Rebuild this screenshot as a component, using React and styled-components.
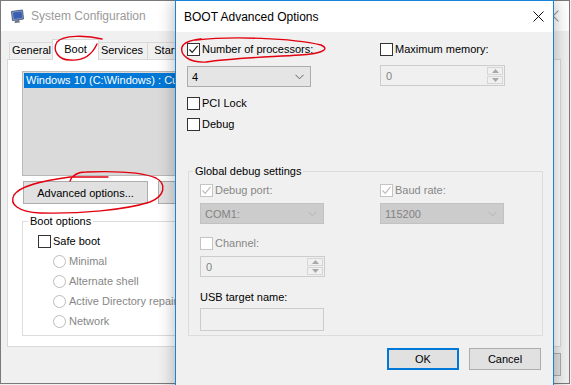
import styled, { createGlobalStyle } from "styled-components";

const GlobalStyle = createGlobalStyle`
  html, body { margin: 0; padding: 0; background: #fff; }
  body {
    font-family: "Liberation Sans", Arial, sans-serif;
    font-size: 11px;
    color: #000;
  }
  * { box-sizing: border-box; }
  fieldset { margin: 0; min-width: 0; }
`;

// desktop canvas, windows are placed on it
const Desktop = styled.div`
  position: relative;
  width: 571px;
  height: 385px;
  overflow: hidden;
  background: #f0f0f0;
`;

const Window = styled.div`
  position: absolute;
  z-index: ${p => p.$z};
  left: ${p => p.$x}px;
  top: ${p => p.$y}px;
  width: ${p => p.$w}px;
  height: ${p => p.$h}px;
  display: flex;
  flex-direction: column;
  background: #f0f0f0;
  border: 1px solid ${p => (p.$active ? "#1883d7" : "#7a7a7a")};
  box-shadow: ${p => (p.$active ? "0 0 16px rgba(0, 0, 0, 0.3)" : "none")};
`;

const TitleBar = styled.div`
  flex: none;
  display: flex;
  align-items: center;
  height: ${p => p.$h}px;
  padding-left: ${p => p.$pad}px;
  gap: 6px;
  background: #fff;
  font-size: 12px;
  color: ${p => (p.$active ? "#000" : "#9a9a9a")};
`;

const TitleText = styled.span`
  flex: 1;
  white-space: nowrap;
`;

const CloseBtn = styled.span`
  width: ${p => p.$w}px;
  height: 100%;
  display: flex;
  align-items: center;
  justify-content: center;
  flex: none;
`;

/* ---------- background window ---------- */

const BackBody = styled.div`
  flex: 1;
  display: flex;
  flex-direction: column;
  padding: 8px 8px 0 6px;
`;

const TabStrip = styled.div`
  display: flex;
  align-items: flex-end;
  height: 21px;
  padding-left: 3px;
  margin-bottom: -1px;
  position: relative;
  z-index: 1;
`;

const Tab = styled.div`
  display: flex;
  align-items: center;
  justify-content: center;
  width: ${p => p.$w}px;
  height: ${p => (p.$active ? 21 : 18)}px;
  padding-bottom: 2px;
  margin: 0 ${p => (p.$active ? -2 : 0)}px 0 ${p => (p.$active ? -2 : -1)}px;
  border: 1px solid #d9d9d9;
  border-bottom: ${p => (p.$active ? "none" : "1px solid #d9d9d9")};
  background: ${p => (p.$active ? "#fff" : "#f0f0f0")};
  position: relative;
  z-index: ${p => (p.$active ? 2 : 0)};
  white-space: nowrap;
`;

const TabPanel = styled.div`
  height: 288px;
  background: #fff;
  border: 1px solid #d9d9d9;
  padding: 11px 14px 0;
  display: flex;
  flex-direction: column;
`;

const ListBox = styled.div`
  height: 105px;
  border: 1px solid #b9b9b9;
  background: #dadada;
  padding: 1px;
`;

const ListItem = styled.div`
  height: 15px;
  line-height: 15px;
  padding-left: 2px;
  background: ${p => (p.$selected ? "#0078d7" : "transparent")};
  color: ${p => (p.$selected ? "#fff" : "#000")};
  white-space: nowrap;
`;

const ButtonRow = styled.div`
  display: flex;
  gap: 10px;
  justify-content: ${p => (p.$end ? "flex-end" : "flex-start")};
  margin-top: ${p => p.$mt || 0}px;
  padding-right: ${p => p.$pr || 0}px;
  padding-left: ${p => p.$pl || 0}px;
`;

const Button = styled.button`
  width: ${p => p.$w}px;
  height: ${p => p.$h || 23}px;
  flex: none;
  font: inherit;
  color: #000;
  background: #e1e1e1;
  border: ${p => (p.$default ? "2px solid #0078d7" : "1px solid #adadad")};
  padding: 0;
`;

const GroupBox = styled.fieldset`
  border: 1px solid #dcdcdc;
  padding: ${p => p.$pad};
  margin: ${p => p.$m};
  height: ${p => p.$h}px;
`;

const Legend = styled.legend`
  padding: 0 2px;
  margin-left: ${p => p.$ml}px;
  line-height: 14px;
`;

const OptionList = styled.div`
  display: flex;
  flex-direction: column;
`;

const OptionRow = styled.div`
  display: flex;
  align-items: center;
  height: 20px;
  padding-left: ${p => p.$indent || 0}px;
`;

const RadioCircle = styled.span`
  width: 13px;
  height: 13px;
  border-radius: 50%;
  border: 1px solid #bcbcbc;
  background: #fff;
  flex: none;
`;

const Label = styled.span`
  color: ${p => (p.$disabled ? "#878787" : "#000")};
  white-space: nowrap;
  line-height: 13px;
  margin-left: ${p => p.$ml || 0}px;
`;

const CheckRow = styled.div`
  display: flex;
  align-items: center;
  gap: 2px;
  height: 13px;
  margin-top: ${p => p.$mt || 0}px;
`;

const CheckBox = styled.span`
  width: 13px;
  height: 13px;
  flex: none;
  border: 1px solid ${p => (p.$disabled ? "#c4c4c4" : "#333")};
  background: #fff;
  display: flex;
  align-items: center;
  justify-content: center;
`;

function Check({ label, checked, disabled, mt }) {
  return (
    <CheckRow $mt={mt}>
      <CheckBox $disabled={disabled}>
        {checked && (
          <svg width="11" height="11" viewBox="0 0 11 11">
            <path
              d="M1.5 5.5 L4.2 8.3 L9.6 1.8"
              fill="none"
              stroke={disabled ? "#bcbcbc" : "#222"}
              strokeWidth="1.2"
            />
          </svg>
        )}
      </CheckBox>
      <Label $disabled={disabled}>{label}</Label>
    </CheckRow>
  );
}

function Radio({ label }) {
  return (
    <OptionRow $indent={15}>
      <RadioCircle />
      <Label $disabled $ml={3}>
        {label}
      </Label>
    </OptionRow>
  );
}

/* ---------- dialog ---------- */

const DialogBody = styled.div`
  flex: 1;
  display: flex;
  flex-direction: column;
  padding: 11px 10px 0 11px;
`;

const Columns = styled.div`
  display: grid;
  grid-template-columns: ${p => p.$first}px 1fr;
`;

const Field = styled.div`
  display: flex;
  flex-direction: column;
  gap: ${p => p.$gap}px;
  margin-top: ${p => p.$mt || 0}px;
`;

const Combo = styled.div`
  width: 124px;
  height: 21px;
  display: flex;
  align-items: center;
  justify-content: space-between;
  padding: 0 6px 0 4px;
  border: 1px solid ${p => (p.$disabled ? "#c2c2c2" : "#acacac")};
  background: ${p => (p.$disabled ? "#cccccc" : "#e5e5e5")};
  color: ${p => (p.$disabled ? "#838383" : "#000")};
`;

function Select({ value, disabled }) {
  return (
    <Combo $disabled={disabled}>
      <span>{value}</span>
      <svg width="9" height="6" viewBox="0 0 9 6">
        <path d="M0.5 0.8 L4.5 4.8 L8.5 0.8" fill="none" stroke={disabled ? "#b4b4b4" : "#606060"} strokeWidth="1" />
      </svg>
    </Combo>
  );
}

const SpinBox = styled.div`
  width: 125px;
  height: 21px;
  display: flex;
  align-items: center;
  border: 1px solid #cccccc;
  background: #f0f0f0;
  color: #838383;
  padding: 1px 1px 1px 5px;
`;

const SpinValue = styled.span`
  flex: 1;
`;

const SpinButtons = styled.div`
  width: 16px;
  height: 100%;
  display: flex;
  flex-direction: column;
  gap: 1px;
`;

const SpinPart = styled.div`
  flex: 1;
  border: 1px solid #d6d6d6;
  background: #f0f0f0;
  display: flex;
  align-items: center;
  justify-content: center;
`;

function Spin({ value }) {
  return (
    <SpinBox>
      <SpinValue>{value}</SpinValue>
      <SpinButtons>
        <SpinPart>
          <svg width="7" height="4" viewBox="0 0 7 4">
            <path d="M0 4 L3.5 0 L7 4 Z" fill="#a8a8a8" />
          </svg>
        </SpinPart>
        <SpinPart>
          <svg width="7" height="4" viewBox="0 0 7 4">
            <path d="M0 0 L3.5 4 L7 0 Z" fill="#a8a8a8" />
          </svg>
        </SpinPart>
      </SpinButtons>
    </SpinBox>
  );
}

const TextBox = styled.div`
  width: 124px;
  height: 23px;
  border: 1px solid #cccccc;
  background: #f0f0f0;
`;

const Caption = styled.div`
  line-height: 13px;
  margin-top: ${p => p.$mt}px;
  margin-bottom: ${p => p.$mb}px;
`;

/* ---------- drawings ---------- */

const AppIcon = () => (
  <svg width="15" height="15" viewBox="0 0 15 15">
    <path d="M1.5 2.5 L12.5 1 L13.5 10 L2.5 11.5 Z" fill="#8aa0c8" stroke="#4f5f80" strokeWidth="1" />
    <path d="M3 3.6 L11.6 2.5 L12.3 9 L3.7 10.1 Z" fill="#3a5fb0" />
    <path d="M5 11.3 L9 10.8 L10 13.5 L4.5 14 Z" fill="#6f7a8c" />
  </svg>
);

const CloseIcon = ({ color, size }) => (
  <svg width={size} height={size} viewBox="0 0 11 11">
    <path d="M0.5 0.5 L10.5 10.5 M10.5 0.5 L0.5 10.5" stroke={color} strokeWidth="1" />
  </svg>
);

const Annotations = styled.svg`
  position: absolute;
  left: 0;
  top: 0;
  z-index: 10;
  pointer-events: none;
`;

const marks = [
  "M102 39 C86 35, 63 35, 57 42 C52 50, 58 60, 70 60 C83 61, 92 55, 97 44",
  "M70 181 C72 176, 77 172, 86 172 C112 171, 142 172, 156 178 C167 184, 165 196, 150 202 C125 210, 80 214, 40 213 C18 212, 9 204, 14 195 C20 186, 40 181, 70 177 L108 177",
  "M196 40 C232 36, 292 38, 321 45 C332 50, 318 54, 300 55 C270 57, 232 58, 206 62 C189 63, 180 55, 182 47 C184 42, 191 40, 201 39"
];

const tabs = [
  { label: "General", w: 45 },
  { label: "Boot", w: 47 },
  { label: "Services", w: 52 },
  { label: "Startup", w: 50 },
  { label: "Tools", w: 40 }
];
const radios = ["Minimal", "Alternate shell", "Active Directory repair", "Network"];

export default function App() {
  return (
    <>
      <GlobalStyle />
      <Desktop>
        <Window $z={1} $x={0} $y={0} $w={570} $h={384}>
          <TitleBar $h={30} $pad={9}>
            <AppIcon />
            <TitleText>System Configuration</TitleText>
            <CloseBtn $w={32}>
              <CloseIcon color="#999" size={12} />
            </CloseBtn>
          </TitleBar>
          <BackBody>
            <TabStrip>
              {tabs.map(t => (
                <Tab key={t.label} $w={t.w} $active={t.label === "Boot"}>
                  {t.label}
                </Tab>
              ))}
            </TabStrip>
            <TabPanel>
              <ListBox>
                <ListItem $selected>{"Windows 10 (C:\\Windows) : Current OS; Default OS"}</ListItem>
              </ListBox>
              <ButtonRow $mt={5} $pl={1}>
                <Button $w={125}>Advanced options...</Button>
                <Button $w={125}>Set as default</Button>
                <Button $w={75}>Delete</Button>
              </ButtonRow>
              <GroupBox $pad="3px 0 0 15px" $m="10px 0 0 0" $h={122}>
                <Legend $ml={-10}>Boot options</Legend>
                <OptionList>
                  <OptionRow>
                    <Check label="Safe boot" />
                  </OptionRow>
                  {radios.map(r => (
                    <Radio key={r} label={r} />
                  ))}
                </OptionList>
              </GroupBox>
            </TabPanel>
            <ButtonRow $end $mt={6} $pr={-2}>
              <Button $w={75}>OK</Button>
              <Button $w={75}>Cancel</Button>
              <Button $w={75}>Apply</Button>
              <Button $w={75}>Help</Button>
            </ButtonRow>
          </BackBody>
        </Window>

        <Window $z={2} $x={175} $y={0} $w={379} $h={400} $active>
          <TitleBar $h={31} $pad={8} $active>
            <TitleText>BOOT Advanced Options</TitleText>
            <CloseBtn $w={30}>
              <CloseIcon color="#111" size={11} />
            </CloseBtn>
          </TitleBar>
          <DialogBody>
            <Columns $first={193}>
              <Field $gap={10}>
                <Check label="Number of processors:" checked />
                <Select value="4" />
              </Field>
              <Field $gap={9}>
                <Check label="Maximum memory:" />
                <Spin value="0" />
              </Field>
            </Columns>
            <Check label="PCI Lock" mt={10} />
            <Check label="Debug" mt={8} />
            <GroupBox $pad="5px 0 0 11px" $m="33px 0 0 1px" $h={172}>
              <Legend $ml={-7}>Global debug settings</Legend>
              <Columns $first={180}>
                <Field $gap={6} $mt={1}>
                  <Check label="Debug port:" checked disabled />
                  <Select value="COM1:" disabled />
                </Field>
                <Field $gap={6} $mt={1}>
                  <Check label="Baud rate:" checked disabled />
                  <Select value="115200" disabled />
                </Field>
              </Columns>
              <Field $gap={6} $mt={13}>
                <Check label="Channel:" disabled />
                <Spin value="0" />
              </Field>
              <Caption $mt={14} $mb={4}>
                USB target name:
              </Caption>
              <TextBox />
            </GroupBox>
            <ButtonRow $end $mt={12} $pr={2}>
              <Button $w={72} $h={22} $default>
                OK
              </Button>
              <Button $w={72} $h={22}>
                Cancel
              </Button>
            </ButtonRow>
          </DialogBody>
        </Window>

        <Annotations width="571" height="385" viewBox="0 0 571 385">
          {marks.map((d, i) => (
            <path key={i} d={d} fill="none" stroke="#e3000f" strokeWidth="1.4" strokeLinecap="round" />
          ))}
        </Annotations>
      </Desktop>
    </>
  );
}
